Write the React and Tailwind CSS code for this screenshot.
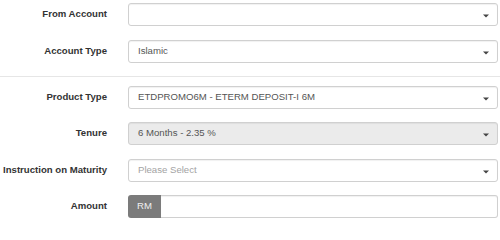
import React from 'react';

function Caret() {
  return (
    <svg width="6" height="4" viewBox="0 0 6 4" className="shrink-0 mt-[2px]">
      <path d="M0 0.5 H6 L3 3.5 Z" fill="#444" />
    </svg>
  );
}

function Row({ label, children, className = '' }) {
  return (
    <div className={`flex items-center h-[23px] ${className}`}>
      <div className="w-[107px] text-right font-bold text-[9.6px] text-[#333] shrink-0">{label}</div>
      <div className="ml-[21px] w-[370px] h-full">{children}</div>
    </div>
  );
}

function Select({ value, placeholder, disabled }) {
  return (
    <div
      className={`h-full flex items-center justify-between border border-[#d0d0d0] rounded-[3px] pl-[9px] pr-[8px] text-[9.6px] shadow-[inset_0_1px_1px_rgba(0,0,0,0.06)] ${
        disabled ? 'bg-[#ebebeb]' : 'bg-white'
      }`}
    >
      <span className={value ? 'text-[#555]' : 'text-[#a3a3a3]'}>{value || placeholder}</span>
      <Caret />
    </div>
  );
}

export default function App() {
  return (
    <div className="w-[500px] h-[224px] bg-white overflow-hidden pt-[3px]" style={{ fontFamily: '"Liberation Sans", Arial, sans-serif' }}>
      <Row label="From Account">
        <Select value="" placeholder="" />
      </Row>
      <Row label="Account Type" className="mt-[14px]">
        <Select value="Islamic" />
      </Row>
      <div className="mt-[13px] h-px bg-[#e6e6e6]" />
      <Row label="Product Type" className="mt-[9px]">
        <Select value="ETDPROMO6M - ETERM DEPOSIT-I 6M" />
      </Row>
      <Row label="Tenure" className="mt-[13px]">
        <Select value="6 Months - 2.35 %" disabled />
      </Row>
      <Row label="Instruction on Maturity" className="mt-[14px]">
        <Select value="" placeholder="Please Select" />
      </Row>
      <Row label="Amount" className="mt-[13px]">
        <div className="h-full flex">
          <div className="w-[33px] h-full bg-[#7b7b7b] rounded-l-[3px] flex items-center pl-[9px] text-[9.6px] text-[#f0f0f0]">RM</div>
          <div className="flex-1 h-full border border-l-0 border-[#d0d0d0] rounded-r-[3px] bg-white shadow-[inset_0_1px_1px_rgba(0,0,0,0.06)]" />
        </div>
      </Row>
    </div>
  );
}
